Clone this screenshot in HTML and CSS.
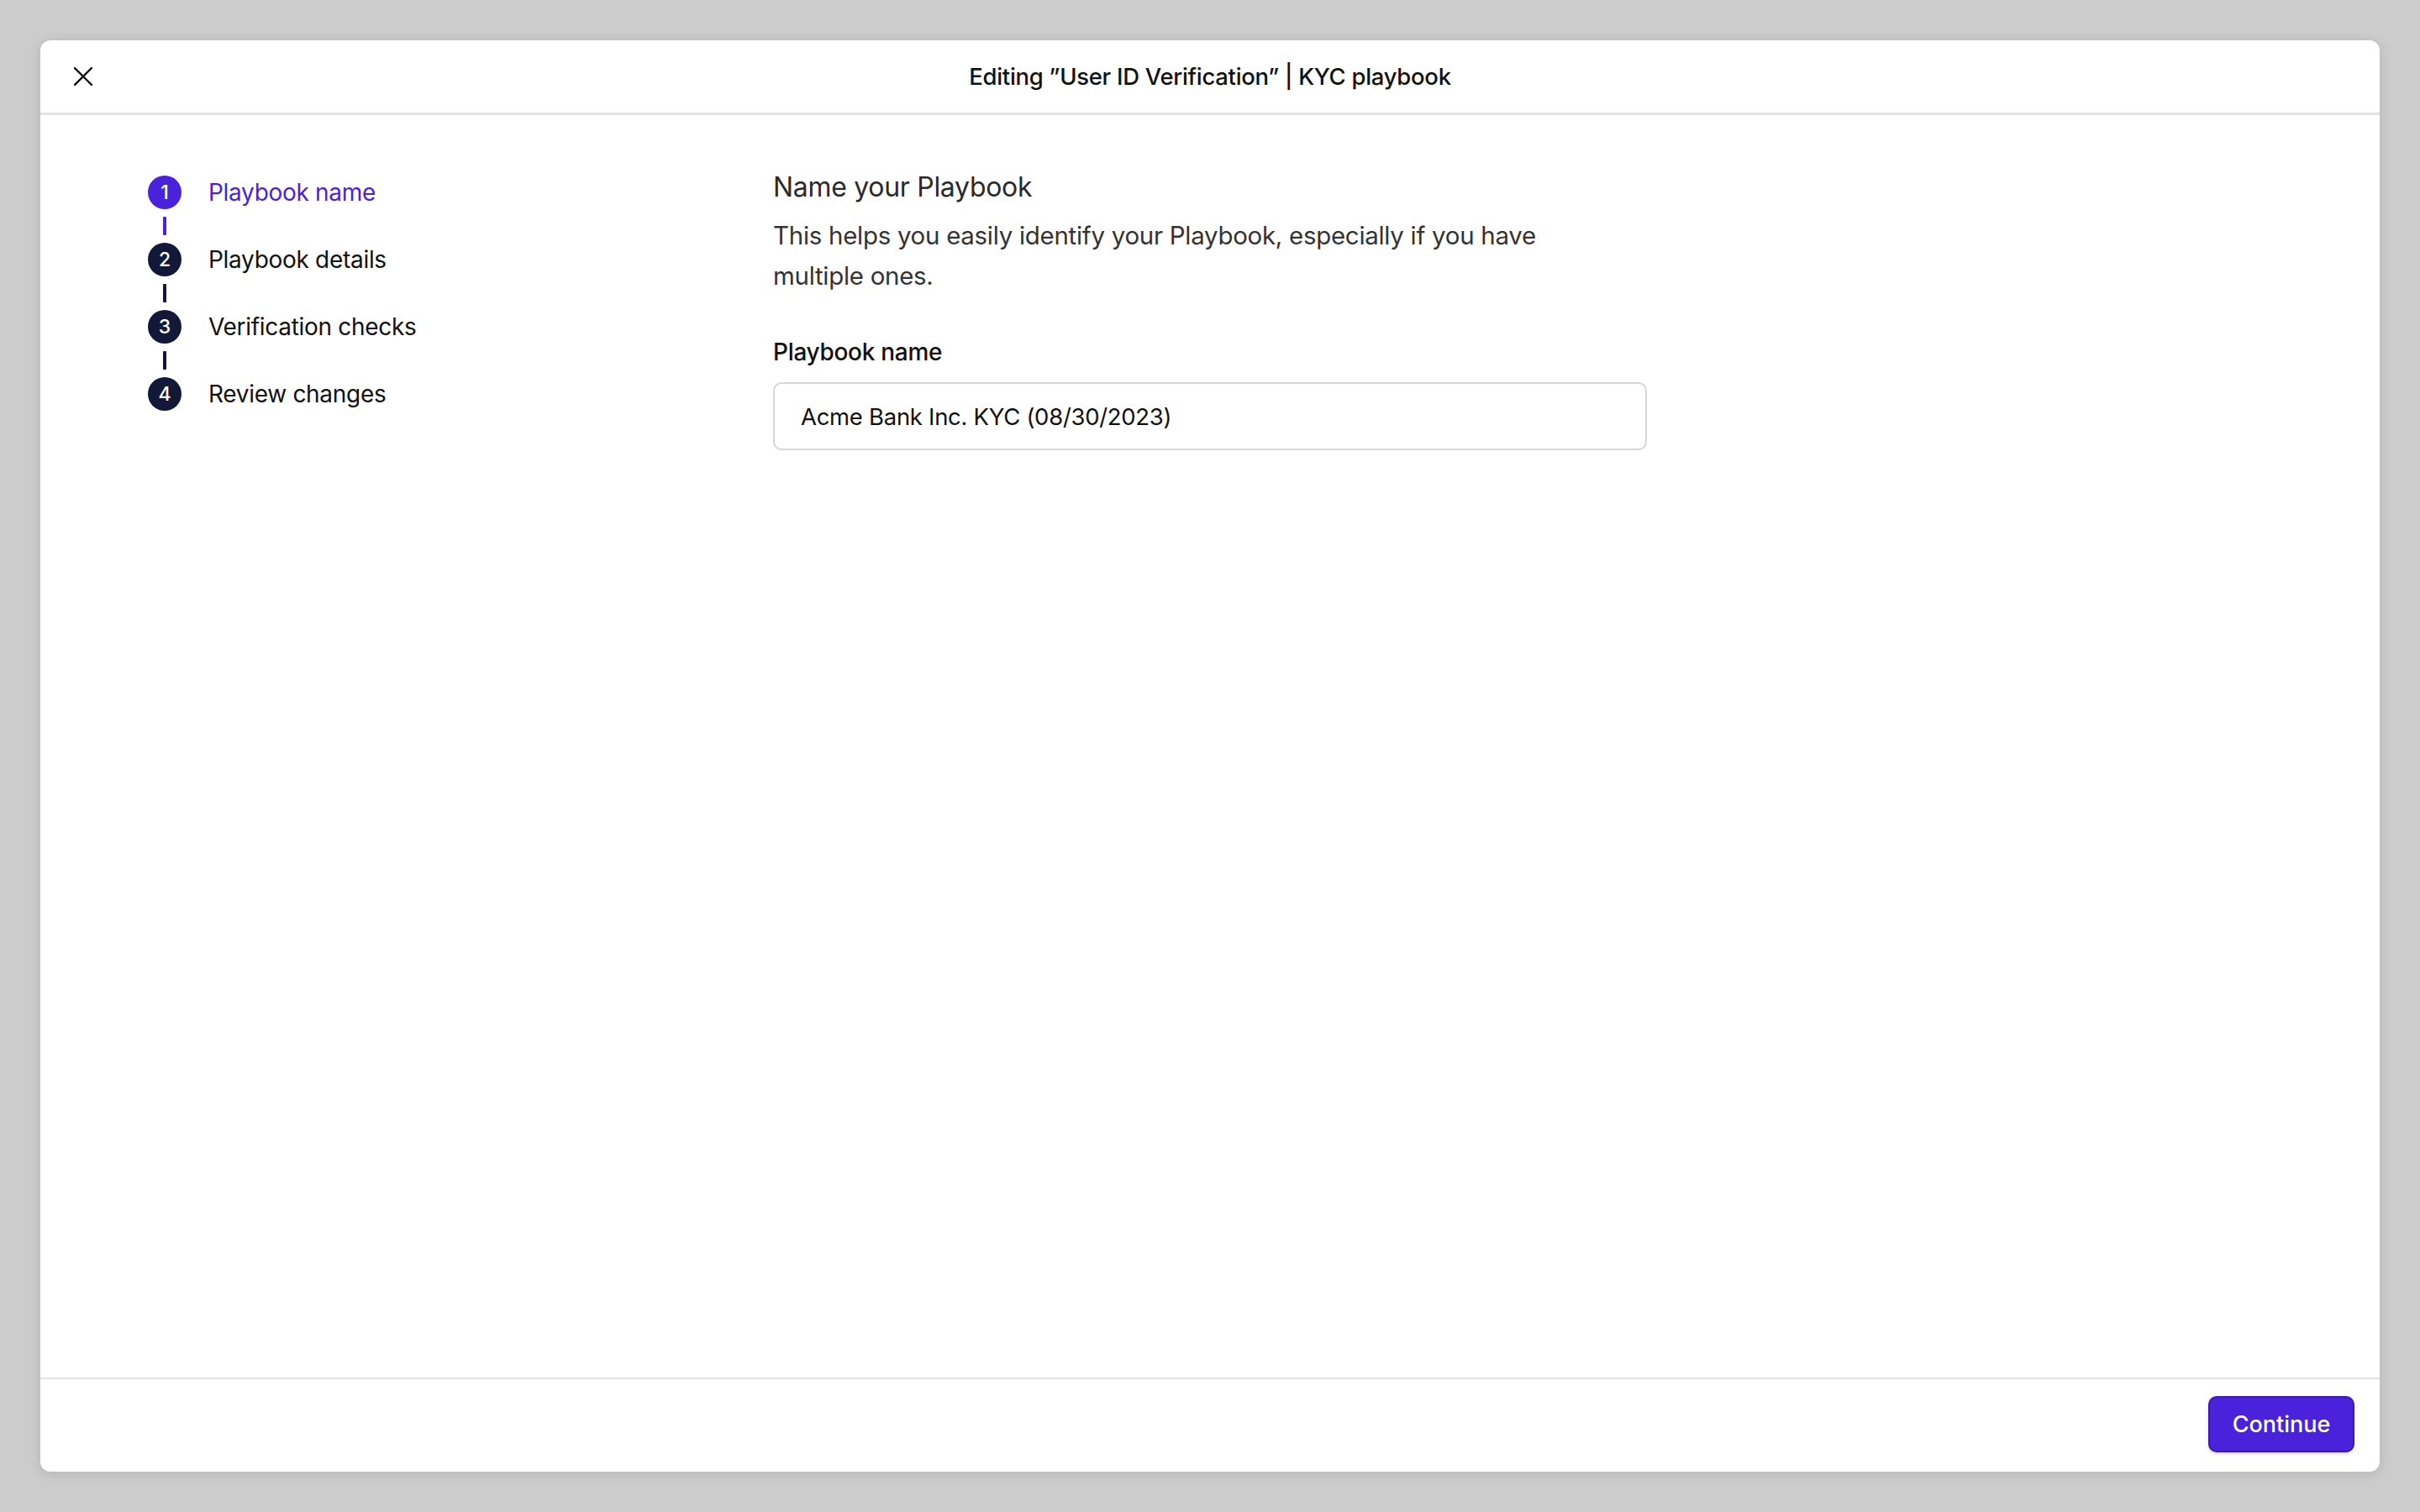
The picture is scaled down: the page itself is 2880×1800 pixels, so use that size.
FILE: index.html
```html
<!DOCTYPE html>
<html lang="en">
<head>
<meta charset="utf-8">
<title>Editing Playbook</title>
<link rel="stylesheet" href="styles.css">
</head>
<body>
<div class="modal">
  <header class="modal-header">
    <button class="close-btn" aria-label="Close">
      <svg width="22" height="22" viewBox="0 0 22 22"><path d="M1 1 L21 21 M21 1 L1 21" stroke="#111" stroke-width="2.4" stroke-linecap="square" fill="none"/></svg>
    </button>
    <div class="modal-title">Editing ”User ID Verification” | KYC playbook</div>
    <div class="header-spacer"></div>
  </header>
  <main class="modal-body">
    <nav class="stepper">
      <div class="step active"><span class="step-num">1</span><span class="step-label">Playbook name</span></div>
      <div class="connector active"></div>
      <div class="step"><span class="step-num">2</span><span class="step-label">Playbook details</span></div>
      <div class="connector"></div>
      <div class="step"><span class="step-num">3</span><span class="step-label">Verification checks</span></div>
      <div class="connector"></div>
      <div class="step"><span class="step-num">4</span><span class="step-label">Review changes</span></div>
    </nav>
    <section class="content">
      <h2 class="content-title">Name your Playbook</h2>
      <p class="content-desc">This helps you easily identify your Playbook, especially if you have multiple ones.</p>
      <label class="field-label" for="pbname">Playbook name</label>
      <input class="field-input" id="pbname" type="text" value="Acme Bank Inc. KYC (08/30/2023)">
    </section>
  </main>
  <footer class="modal-footer">
    <button class="primary-btn">Continue</button>
  </footer>
</div>
</body>
</html>
```
FILE: styles.css
```css
* { box-sizing: border-box; }
html, body { margin: 0; padding: 0; }
body {
  background: #cccccc;
  width: 2880px;
  height: 1800px;
  padding: 48px;
  font-family: "Inter", "Noto Sans", sans-serif;
  color: #111111;
}
.modal {
  width: 2784px;
  height: 1704px;
  background: #ffffff;
  border-radius: 12px;
  box-shadow: 0 2px 14px rgba(0,0,0,0.12);
  display: flex;
  flex-direction: column;
  overflow: hidden;
}
.modal-header {
  height: 89px;
  flex: none;
  border-bottom: 3px solid #e2e2e2;
  display: grid;
  grid-template-columns: 1fr auto 1fr;
  align-items: center;
  padding: 0 40px;
}
.close-btn {
  width: 22px;
  height: 22px;
  padding: 0;
  border: 0;
  background: none;
  display: flex;
  justify-self: start;
}
.modal-title {
  font-size: 27.5px;
  font-weight: 500;
  color: #111111;
  letter-spacing: -0.3px;
}
.modal-body {
  flex: 1;
  display: flex;
  padding: 72px 0 0 128px;
}
.stepper {
  width: 744px;
  flex: none;
  display: flex;
  flex-direction: column;
}
.step {
  display: flex;
  align-items: center;
  gap: 32px;
  height: 40px;
}
.step-num {
  width: 40px;
  height: 40px;
  border-radius: 50%;
  background: #121838;
  color: #ffffff;
  font-size: 23px;
  font-weight: 500;
  display: flex;
  align-items: center;
  justify-content: center;
}
.step-label {
  font-size: 28px;
  color: #111111;
  letter-spacing: -0.3px;
}
.step.active .step-num { background: #4b22db; }
.step.active .step-label { color: #4b22db; }
.connector {
  width: 4px;
  height: 22px;
  margin: 9px 0 9px 18px;
  background: #121838;
  border-radius: 1px;
}
.connector.active { background: #4b22db; }
.content {
  width: 1040px;
  display: flex;
  flex-direction: column;
  margin-top: -6px;
}
.content-title {
  margin: 0;
  font-size: 32px;
  font-weight: 400;
  line-height: 40px;
  color: #2a2a2a;
  letter-spacing: -0.3px;
}
.content-desc {
  margin: 13px 0 0 0;
  width: 1000px;
  font-size: 29.5px;
  line-height: 48px;
  color: #333333;
  letter-spacing: -0.3px;
}
.field-label {
  margin-top: 47px;
  font-size: 28px;
  font-weight: 500;
  line-height: 40px;
  color: #111111;
  letter-spacing: -0.3px;
}
.field-input {
  margin-top: 16px;
  width: 1040px;
  height: 81px;
  border: 2px solid #d6d6d6;
  border-radius: 10px;
  padding: 0 31px;
  font-family: inherit;
  font-size: 27.5px;
  color: #111111;
  letter-spacing: -0.3px;
  outline: none;
}
.modal-footer {
  height: 112px;
  flex: none;
  border-top: 2px solid #e2e2e2;
  display: flex;
  justify-content: flex-end;
  align-items: center;
  padding: 0 30px 4px 0;
}
.primary-btn {
  width: 174px;
  height: 67px;
  background: #4b22db;
  border: 2px solid #3a1aa6;
  border-radius: 10px;
  color: #ffffff;
  font-family: inherit;
  font-size: 27px;
  font-weight: 500;
  box-shadow: 0 2px 4px rgba(0,0,0,0.15);
}
```
